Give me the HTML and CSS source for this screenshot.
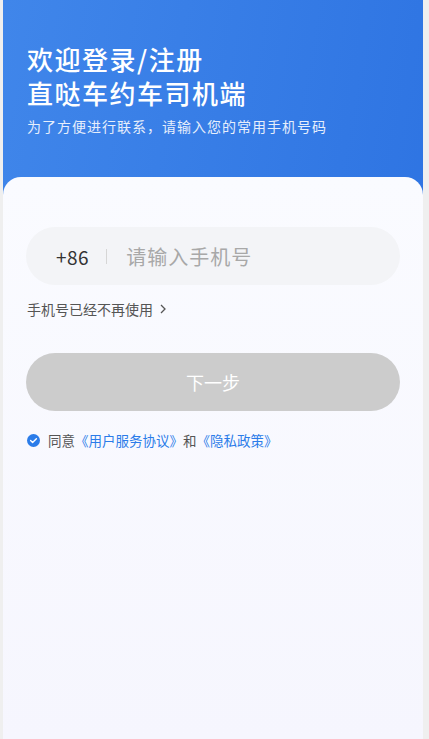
FILE: index.html
```html
<!DOCTYPE html>
<html lang="zh-CN">
<head>
    <meta charset="UTF-8">
    <title>直哒车约车司机端</title>
    <link rel="stylesheet" href="styles.css">
</head>
<body>
<div class="page">
    <div class="header">
        <h1 class="title">欢迎登录/注册<br>直哒车约车司机端</h1>
        <p class="sub">为了方便进行联系，请输入您的常用手机号码</p>
    </div>
    <div class="card">
        <div class="phone">
            <span class="code">+86</span>
            <span class="line"></span>
            <span class="holder">请输入手机号</span>
        </div>
        <div class="lost">手机号已经不再使用
            <svg width="8" height="10" viewBox="0 0 8 10"><path d="M2 1l4 4-4 4" fill="none" stroke="#555" stroke-width="1.3"/></svg>
        </div>
        <div class="btn">下一步</div>
        <div class="agree">
            <svg class="check" width="13" height="13" viewBox="0 0 13 13"><circle cx="6.5" cy="6.5" r="6.5" fill="#2b7ce9"/><path d="M3.6 6.6l2 1.9 3.8-3.7" fill="none" stroke="#fff" stroke-width="1.4" stroke-linecap="round" stroke-linejoin="round"/></svg>
            <span>同意</span><span class="link">《用户服务协议》</span><span>和</span><span class="link">《隐私政策》</span>
        </div>
    </div>
</div>
</body>
</html>
```

FILE: styles.css
```css
* {
    padding: 0;
    margin: 0;
    border: 0;
}

body {
    background: #efefef;
    font-family: "Noto Sans CJK SC", "Noto Sans", sans-serif;
}

.page {
    width: 420px;
    height: 739px;
    margin-left: 3px;
    background: linear-gradient(100deg, #4086ea, #2b71e1);
    display: flex;
    flex-direction: column;
}

.header {
    height: 177px;
    padding: 42px 0 0 24px;
    box-sizing: border-box;
    color: #fff;
}

.title {
    font-size: 26px;
    font-weight: 500;
    letter-spacing: 1.5px;
    line-height: 34px;
}

.sub {
    margin-top: 6px;
    font-size: 14px;
    letter-spacing: 1px;
    line-height: 20px;
    color: #e6eefc;
}

.card {
    flex: 1;
    border-radius: 18px 18px 0 0;
    background: linear-gradient(180deg, #fafbff, #f6f6fe);
    padding: 50px 23px 0 23px;
}

.phone {
    height: 58px;
    border-radius: 29px;
    background: #f3f4f7;
    display: flex;
    align-items: center;
    padding-left: 30px;
}

.code {
    font-size: 19px;
    letter-spacing: 0.5px;
    color: #333;
}

.line {
    width: 1px;
    height: 15px;
    background: #d6d6d6;
    margin: 0 19px 0 17px;
}

.holder {
    font-size: 20px;
    letter-spacing: 1px;
    color: #a8a8a8;
}

.lost {
    margin: 14px 0 0 1px;
    font-size: 14px;
    line-height: 20px;
    color: #555;
    display: flex;
    align-items: center;
    gap: 6px;
}

.btn {
    margin-top: 34px;
    height: 58px;
    border-radius: 29px;
    background: #cccccc;
    color: #fff;
    font-size: 18px;
    display: flex;
    align-items: center;
    justify-content: center;
}

.agree {
    margin: 19px 0 0 1px;
    display: flex;
    align-items: center;
    font-size: 13.5px;
    line-height: 20px;
    color: #555;
}

.check {
    margin-right: 8px;
}

.link {
    color: #2b7ce9;
}
```
